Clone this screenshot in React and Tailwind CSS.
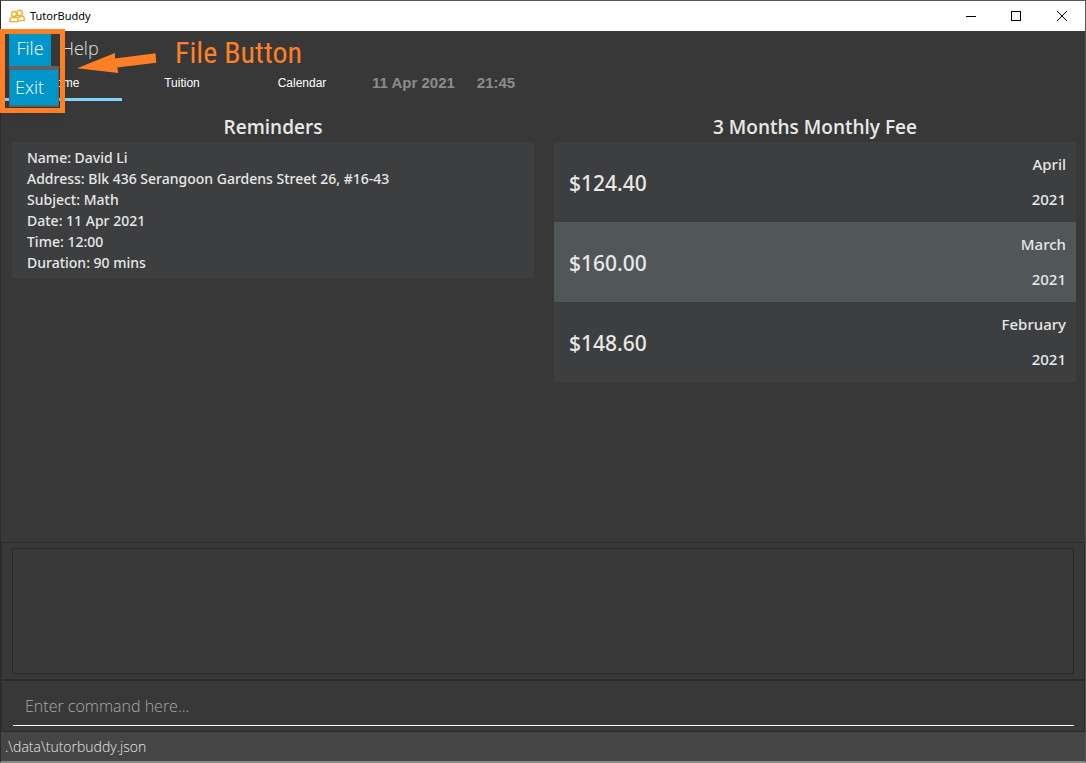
const reminder = [
  'Name: David Li',
  'Address: Blk 436 Serangoon Gardens Street 26, #16-43',
  'Subject: Math',
  'Date: 11 Apr 2021',
  'Time: 12:00',
  'Duration: 90 mins',
];

const fees = [
  { amount: '$124.40', month: 'April', year: '2021' },
  { amount: '$160.00', month: 'March', year: '2021' },
  { amount: '$148.60', month: 'February', year: '2021' },
];

function BuddyIcon() {
  return (
    <svg viewBox="0 0 16 14" className="h-3.5 w-4" fill="none" stroke="#eeb02f" strokeWidth="1.4">
      <circle cx="5" cy="5" r="2.5" />
      <circle cx="10.6" cy="4" r="2.8" />
      <path d="M9 12.600H.9v-1.700c0-1.800 1.200-2.700 2.800-3l1.500 1 1.500-1c1.500.3 2.300 1.200 2.300 3z" />
      <path d="M9 11.600h6.200V9.800c0-1.700-1-2.600-2.600-3l-1.800 1.500-1.900-1.200" />
    </svg>
  );
}

function TitleBar() {
  return (
    <header className="flex h-[30px] items-center bg-white pl-2 text-black">
      <BuddyIcon />
      <h1 className="ml-[5px] flex-1 font-['Noto_Sans','Open_Sans',sans-serif] text-[11px]">TutorBuddy</h1>
      <button type="button" aria-label="Minimize" className="flex h-full w-[45px] items-center justify-center">
        <svg viewBox="0 0 10 10" className="size-2.5" stroke="black" shapeRendering="crispEdges"><path d="M0 5.500h10" /></svg>
      </button>
      <button type="button" aria-label="Maximize" className="flex h-full w-[45px] items-center justify-center">
        <svg viewBox="0 0 10 10" className="size-2.5" fill="none" stroke="black" shapeRendering="crispEdges"><path d="M.5.5h9v9h-9z" /></svg>
      </button>
      <button type="button" aria-label="Close" className="flex h-full w-[47px] items-center justify-center">
        <svg viewBox="0 0 10 10" className="size-2.5" stroke="black"><path d="M0 0l10 10M10 0L0 10" /></svg>
      </button>
    </header>
  );
}

function MenuBar() {
  return (
    <nav className="relative flex h-9 items-start pt-[3px] pl-2 text-[18px] font-light text-[#e0e0e0]">
      <button type="button" className="h-8 w-[42px] bg-[#0096c9] pb-1 text-white">File</button>
      <button type="button" className="h-8 px-2.5 pb-1">Help</button>
      <div className="absolute top-[35px] left-2 z-10 w-[50px] border-t-[4px] border-r border-b-2 border-l border-[#606060] bg-[#606060] shadow-lg">
        <button type="button" className="block h-[35px] w-full bg-[#0096c9] pl-[5px] text-left text-white">Exit</button>
      </div>
      <div className="pointer-events-none absolute -top-0.5 -left-px z-20 h-[84px] w-[65px] border-[5px] border-[#ff7f27]" />
      <svg viewBox="0 0 80 20" className="pointer-events-none absolute top-[22px] left-[76px] h-5 w-20" fill="#ff7f27">
        <path d="M0 15.300 38 0v5.500L78.500.2l.8 9.500-39 4.800 1 5.500z" />
      </svg>
      <p className="absolute top-0.5 left-[174px] font-['Roboto_Condensed','Arial_Narrow',Roboto,sans-serif] text-[30px] leading-10 font-normal text-[#ff7f27]">File Button</p>
    </nav>
  );
}

function Tabs() {
  return (
    <div className="flex h-[34px] items-stretch pl-1 font-['Liberation_Sans',sans-serif] text-[12px] text-white">
      <button type="button" className="w-[117px] border-b-3 border-[#81d4fa]">Home</button>
      <button type="button" className="w-[120px] border-b-3 border-transparent">Tuition</button>
      <button type="button" className="w-[120px] border-b-3 border-transparent">Calendar</button>
      <div className="flex items-center gap-[22px] border-b-2 border-transparent pt-px pl-2.5 text-[15px] font-bold text-[#8c8c8c]">
        <span>11 Apr 2021</span>
        <span>21:45</span>
      </div>
    </div>
  );
}

export default function App() {
  return (
    <div className="flex min-h-screen flex-col border border-b-2 border-[#555] border-b-[#888] border-l-[#2b2b2b] bg-[#383838] font-['Open_Sans','Noto_Sans',sans-serif] text-[#e8e8e8]">
      <TitleBar />
      <MenuBar />
      <Tabs />
      <main className="grid flex-1 grid-cols-2 gap-5 pt-3 pr-[9px] pl-[11px]">
        <section>
          <h2 className="pb-px text-center text-[19px] leading-7 font-semibold">Reminders</h2>
          <div className="bg-[#3c3e3f] px-[15px] py-[5px] font-['Noto_Sans',sans-serif] text-[14px] leading-[21px] font-medium">
            {reminder.map((line) => <p key={line}>{line}</p>)}
          </div>
        </section>
        <section>
          <h2 className="pb-px text-center text-[19px] leading-7 font-semibold">3 Months Monthly Fee</h2>
          <ul className="font-['Noto_Sans',sans-serif] font-medium">
            {fees.map((fee) => (
              <li key={fee.month} className="flex h-20 items-center justify-between bg-[#3c3e3f] pr-2.5 pl-[15px] even:bg-[#515658]">
                <span className="pt-1 text-[21px]">{fee.amount}</span>
                <span className="flex flex-col gap-[15px] pb-0.5 text-right text-[15px] leading-5">
                  <span>{fee.month}</span>
                  <span>{fee.year}</span>
                </span>
              </li>
            ))}
          </ul>
        </section>
      </main>
      <section className="border border-[#2b2b2b] px-2.5 py-[5px]">
        <output aria-label="Result" className="block h-[126px] border border-[#2b2b2b]" />
      </section>
      <form className="border border-[#2b2b2b] pt-[5px] pr-2.5 pb-[5px] pl-[11px]" onSubmit={(e) => e.preventDefault()}>
        <input aria-label="Command" placeholder="Enter command here..." className="h-10 w-full border-b border-white bg-transparent px-3 text-[16px] font-light outline-none placeholder:text-[#a9a9a9]" />
      </form>
      <footer className="h-[29px] bg-[#454545] px-1 pt-px text-[14px] leading-7 font-light">.\data\tutorbuddy.json</footer>
    </div>
  );
}
